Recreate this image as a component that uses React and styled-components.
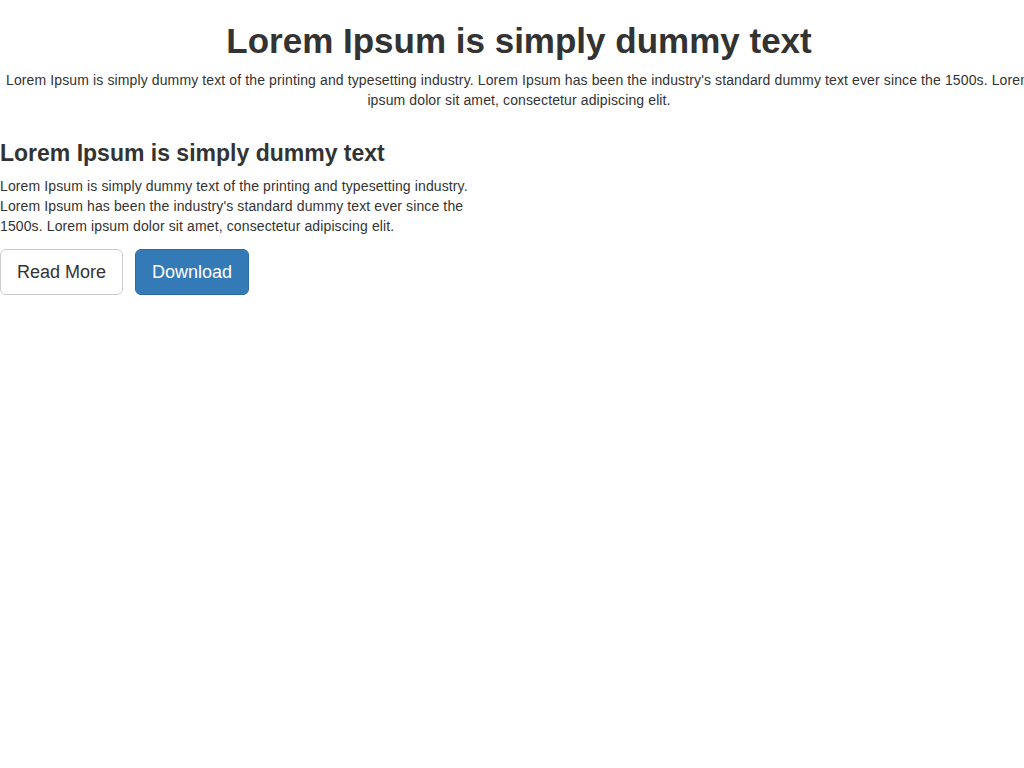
import React from 'react';
import styled, { createGlobalStyle } from 'styled-components';

const GlobalStyle = createGlobalStyle`
  html, body {
    margin: 0;
    padding: 0;
    background: #fff;
    overflow-x: hidden;
  }
  body {
    font-family: "Liberation Sans", Arial, sans-serif;
    font-size: 14px;
    line-height: 20px;
    letter-spacing: 0.12px;
    color: #333;
  }
  * {
    box-sizing: border-box;
  }
`;

const Hero = styled.header`
  display: flow-root;
  width: 1038px;
  text-align: center;
`;

const Title = styled.h1`
  margin: 21px 0 9px;
  font-size: 35px;
  font-weight: 700;
  line-height: 39.6px;
  letter-spacing: 0;
`;

const Text = styled.p`
  margin: 0 0 10px;
`;

const Section = styled.section`
  display: flow-root;
  width: ${({ width }) => width || 'auto'};
`;

const Subtitle = styled.h3`
  margin: 20px 0 10px;
  font-size: 23px;
  font-weight: 700;
  line-height: 26.4px;
  letter-spacing: 0;
`;

const Actions = styled.div`
  display: flex;
  gap: 12px;
  padding-top: 3px;
`;

const Button = styled.button`
  font-family: inherit;
  font-size: 18px;
  line-height: 24px;
  letter-spacing: 0;
  padding: 10px 16px;
  border-radius: 6px;
  border: 1px solid ${({ primary }) => (primary ? '#2e6da4' : '#ccc')};
  background: ${({ primary }) => (primary ? '#337ab7' : '#fff')};
  color: ${({ primary }) => (primary ? '#fff' : '#333')};
  cursor: pointer;
`;

const App = () => (
  <>
    <GlobalStyle />
    <Hero>
      <Title>Lorem Ipsum is simply dummy text</Title>
      <Text>
        Lorem Ipsum is simply dummy text of the printing and typesetting industry. Lorem Ipsum has
        been the industry's standard dummy text ever since the 1500s. Lorem ipsum dolor sit amet,
        consectetur adipiscing elit.
      </Text>
    </Hero>
    <Section width="485px">
      <Subtitle>Lorem Ipsum is simply dummy text</Subtitle>
      <Text>
        Lorem Ipsum is simply dummy text of the printing and typesetting industry. Lorem Ipsum has
        been the industry's standard dummy text ever since the 1500s. Lorem ipsum dolor sit amet,
        consectetur adipiscing elit.
      </Text>
      <Actions>
        <Button>Read More</Button>
        <Button primary>Download</Button>
      </Actions>
    </Section>
  </>
);

export default App;
